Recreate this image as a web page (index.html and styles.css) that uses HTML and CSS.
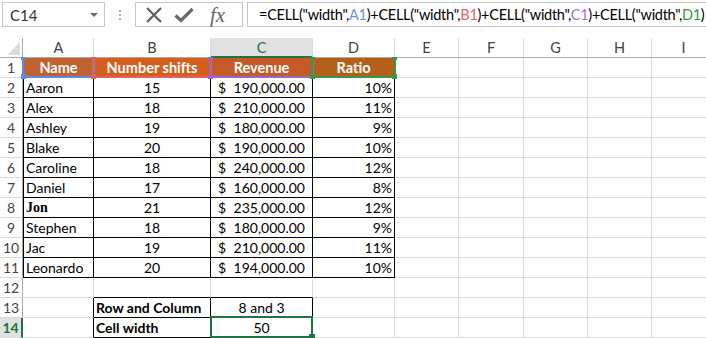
FILE: index.html
```html
<!DOCTYPE html>
<html lang="en">
<head>
  <meta charset="UTF-8">
  <title>CELL width</title>
  <link rel="stylesheet" href="styles.css">
</head>
<body>
  <div class="app">
    <div class="toolbar">
      <div class="namebox"><span>C14</span><span class="caret"></span></div>
      <div class="grip"><i></i><i></i><i></i></div>
      <div class="fxbox">
        <svg class="ico-x" width="18" height="18" viewBox="0 0 18 18"><path d="M2 2 L16 16 M16 2 L2 16" stroke="#5f5f5f" stroke-width="2.2" fill="none"/></svg>
        <svg class="ico-ok" width="20" height="16" viewBox="0 0 20 16"><path d="M1.5 8.5 L7 13.5 L18.5 2" stroke="#6a6a6a" stroke-width="3.2" fill="none"/></svg>
        <span class="fx">fx</span>
      </div>
      <div class="formula">=CELL("width",<span class="ra">A1</span>)+CELL("width",<span class="rb">B1</span>)+CELL("width",<span class="rc">C1</span>)+CELL("width",<span class="rd">D1</span>)</div>
    </div>

    <div class="sheet">
      <div class="row hdr">
        <div class="rh corner"><svg width="13" height="13" viewBox="0 0 13 13"><polygon points="13,0 13,13 0,13" fill="#dcdcdc"/></svg></div>
        <div>A</div><div>B</div><div class="sel">C</div><div>D</div><div>E</div><div>F</div><div>G</div><div>H</div><div>I</div>
      </div>
      <div class="row t">
        <div class="rh">1</div><div class="k o1 th">Name</div><div class="k o2 th">Number shifts</div><div class="k o3 th">Revenue</div><div class="k o4 th">Ratio</div><div></div><div></div><div></div><div></div><div></div>
      </div>
      <div class="row t">
        <div class="rh">2</div><div class="k">Aaron</div><div class="k ctr">15</div><div class="k acc"><span>$</span><span>190,000.00</span></div><div class="k rt">10%</div><div></div><div></div><div></div><div></div><div></div>
      </div>
      <div class="row t">
        <div class="rh">3</div><div class="k">Alex</div><div class="k ctr">18</div><div class="k acc"><span>$</span><span>210,000.00</span></div><div class="k rt">11%</div><div></div><div></div><div></div><div></div><div></div>
      </div>
      <div class="row t">
        <div class="rh">4</div><div class="k">Ashley</div><div class="k ctr">19</div><div class="k acc"><span>$</span><span>180,000.00</span></div><div class="k rt">9%</div><div></div><div></div><div></div><div></div><div></div>
      </div>
      <div class="row t">
        <div class="rh">5</div><div class="k">Blake</div><div class="k ctr">20</div><div class="k acc"><span>$</span><span>190,000.00</span></div><div class="k rt">10%</div><div></div><div></div><div></div><div></div><div></div>
      </div>
      <div class="row t">
        <div class="rh">6</div><div class="k">Caroline</div><div class="k ctr">18</div><div class="k acc"><span>$</span><span>240,000.00</span></div><div class="k rt">12%</div><div></div><div></div><div></div><div></div><div></div>
      </div>
      <div class="row t">
        <div class="rh">7</div><div class="k">Daniel</div><div class="k ctr">17</div><div class="k acc"><span>$</span><span>160,000.00</span></div><div class="k rt">8%</div><div></div><div></div><div></div><div></div><div></div>
      </div>
      <div class="row t">
        <div class="rh">8</div><div class="k serif">Jon</div><div class="k ctr">21</div><div class="k acc"><span>$</span><span>235,000.00</span></div><div class="k rt">12%</div><div></div><div></div><div></div><div></div><div></div>
      </div>
      <div class="row t">
        <div class="rh">9</div><div class="k">Stephen</div><div class="k ctr">18</div><div class="k acc"><span>$</span><span>180,000.00</span></div><div class="k rt">9%</div><div></div><div></div><div></div><div></div><div></div>
      </div>
      <div class="row t">
        <div class="rh">10</div><div class="k">Jac</div><div class="k ctr">19</div><div class="k acc"><span>$</span><span>210,000.00</span></div><div class="k rt">11%</div><div></div><div></div><div></div><div></div><div></div>
      </div>
      <div class="row t">
        <div class="rh">11</div><div class="k">Leonardo</div><div class="k ctr">20</div><div class="k acc"><span>$</span><span>194,000.00</span></div><div class="k rt">10%</div><div></div><div></div><div></div><div></div><div></div>
      </div>
      <div class="row">
        <div class="rh">12</div><div></div><div class="kb"></div><div class="kb"></div><div></div><div></div><div></div><div></div><div></div><div></div>
      </div>
      <div class="row">
        <div class="rh">13</div><div class="kr"></div><div class="k bold">Row and Column</div><div class="k ctr">8 and 3</div><div></div><div></div><div></div><div></div><div></div><div></div>
      </div>
      <div class="row">
        <div class="rh sel">14</div><div class="kr"></div><div class="k bold">Cell width</div><div class="k ctr">50</div><div></div><div></div><div></div><div></div><div></div><div></div>
      </div>

      <div class="ref ref-a"><i class="tl"></i><i class="tr"></i><i class="bl"></i><i class="br"></i></div>
      <div class="ref ref-b"><i class="tl"></i><i class="tr"></i><i class="bl"></i><i class="br"></i></div>
      <div class="ref ref-c"><i class="tl"></i><i class="tr"></i><i class="bl"></i><i class="br"></i></div>
      <div class="ref ref-d"><i class="tl"></i><i class="tr"></i><i class="bl"></i><i class="br"></i></div>
      <div class="cursor"><i></i></div>
    </div>
  </div>
</body>
</html>
```

FILE: styles.css
```css
* {
  box-sizing: border-box;
}
body {
  margin: 0;
  background: #fff;
  color: #000;
  font-family: Lato, "Noto Sans", sans-serif;
  font-size: 14px;
}
.app {
  width: 706px;
  height: 338px;
  overflow: hidden;
}

/* formula bar */
.toolbar {
  height: 38px;
  display: flex;
  align-items: flex-start;
  padding: 2px 0 0 2px;
}
.namebox {
  width: 103px;
  height: 25px;
  border: 1px solid #c6c6c6;
  display: flex;
  align-items: center;
  justify-content: space-between;
  padding: 0 6px 0 7px;
  color: #333;
  font-size: 15px;
}
.caret {
  width: 0;
  height: 0;
  border-left: 4px solid transparent;
  border-right: 4px solid transparent;
  border-top: 4px solid #6a6a6a;
}
.grip {
  width: 30px;
  height: 25px;
  display: flex;
  flex-direction: column;
  align-items: center;
  justify-content: center;
  gap: 2px;
}
.grip i {
  width: 2px;
  height: 2px;
  background: #b0b0b0;
}
.fxbox {
  width: 108px;
  height: 25px;
  border: 1px solid #c6c6c6;
  display: flex;
  align-items: center;
  padding-left: 9px;
  gap: 11px;
}
.fx {
  font-family: "Liberation Serif", serif;
  font-style: italic;
  font-size: 21px;
  color: #666;
  margin-left: 5px;
  line-height: 22px;
}
.formula {
  flex: 1;
  margin-left: 4px;
  height: 25px;
  border: 1px solid #c6c6c6;
  border-right: none;
  padding-left: 11px;
  font-size: 14.5px;
  letter-spacing: -0.28px;
  line-height: 23px;
  white-space: nowrap;
  overflow: hidden;
}
.ra { color: #6a92e2; }
.rb { color: #e0646c; }
.rc { color: #a46fd0; }
.rd { color: #2e9a46; }

/* grid */
.sheet {
  position: relative;
}
.row {
  display: grid;
  grid-template-columns: 23px 71px 117px 102px 82px 64px 65px 64px 64px 64px;
  height: 20px;
}
.row > div {
  border-right: 1px solid #dadada;
  border-bottom: 1px solid #dadada;
  line-height: 20px;
  padding: 0 2px;
  white-space: nowrap;
  overflow: hidden;
}
.row > div:nth-child(2) {
  border-left: 1px solid #fff;
}
.row.t > div:nth-child(2) {
  border-left-color: #000;
}
.hdr > div {
  text-align: center;
  color: #444;
  font-size: 14.5px;
  border-bottom-color: #ababab;
}
.row > .rh {
  text-align: center;
  color: #444;
  padding: 0;
  border-right-color: #ababab;
}
.corner {
  display: flex;
  align-items: flex-end;
  justify-content: flex-end;
  padding: 0 2px 2px 0 !important;
}
.corner svg {
  display: block;
}
.hdr > .sel {
  background: #e1e1e1;
  color: #217346;
  border-bottom: 2px solid #217346;
}
.row > .rh.sel {
  background: #e1e1e1;
  color: #217346;
  font-weight: bold;
  border-right: 2px solid #217346;
}

.row > .k {
  border-right-color: #000;
  border-bottom-color: #000;
}
.row > .kr {
  border-right-color: #000;
}
.row > .kb {
  border-bottom-color: #000;
}
.ctr { text-align: center; }
.rt { text-align: right; }
.bold { font-weight: bold; }
.serif {
  font-family: "Liberation Serif", serif;
  font-weight: bold;
  font-size: 14px;
}
.row > .acc {
  display: flex;
  justify-content: space-between;
  padding: 0 7px;
}
.th {
  color: #fff;
  font-weight: bold;
  font-size: 14.5px;
  text-align: center;
}
.o1 { background: #c0622f; }
.o2 { background: #d55e1c; }
.o3 { background: #c55a28; }
.o4 { background: #b5601a; }

/* formula reference outlines */
.ref {
  position: absolute;
  top: 19px;
  height: 21px;
  border: 2px solid currentColor;
  border-top: 0;
}
.ref i {
  position: absolute;
  width: 5px;
  height: 5px;
  background: currentColor;
}
.ref .tl { left: -3px; top: 0; height: 3px; }
.ref .tr { right: -3px; top: 0; height: 3px; }
.ref .bl { left: -3px; top: 17px; }
.ref .br { right: -3px; top: 17px; }
.ref-a { left: 22px; width: 73px; color: #5a8ce6; }
.ref-b { left: 92px; width: 120px; color: #e0605f; }
.ref-c { left: 209px; width: 105px; color: #9467c8; }
.ref-d { left: 311px; width: 85px; color: #339944; }

.cursor {
  position: absolute;
  left: 210px;
  top: 278px;
  width: 103px;
  height: 22px;
  border: 2px solid #217346;
}
.cursor i {
  position: absolute;
  right: -4px;
  bottom: -4px;
  width: 6px;
  height: 6px;
  background: #217346;
}
```
